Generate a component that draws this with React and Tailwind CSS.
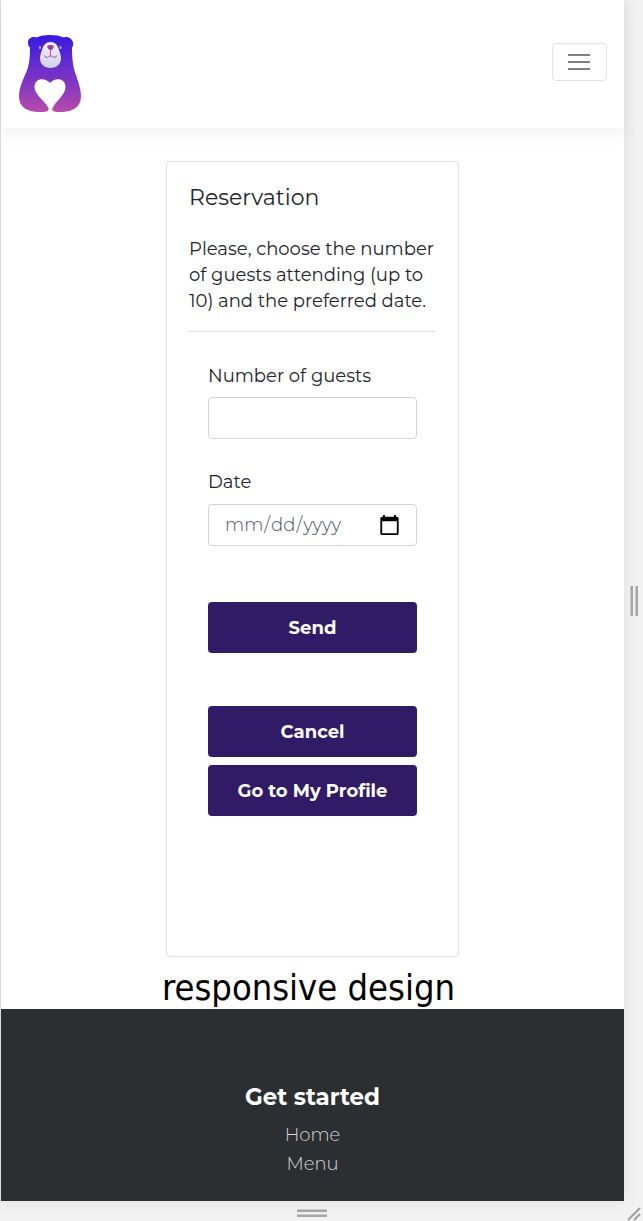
import React from 'react';

function BearLogo() {
  return (
    <svg viewBox="0 0 62 78" className="h-[78px] w-[62px]" role="img" aria-label="Little bear">
      <defs>
        <linearGradient id="fur" x1="0" y1="0" x2="0" y2="1">
          <stop offset="0" stopColor="#3a18e0" />
          <stop offset="0.3" stopColor="#5a2ad2" />
          <stop offset="0.65" stopColor="#8637c0" />
          <stop offset="1" stopColor="#b84cab" />
        </linearGradient>
        <linearGradient id="muzzle" x1="0" y1="0" x2="0" y2="1">
          <stop offset="0" stopColor="#f5f3fb" />
          <stop offset="1" stopColor="#ced2ea" />
        </linearGradient>
      </defs>
      <path
        fill="url(#fur)"
        d="M17 2.500C13 1 9 3.500 9 7.500C9 10 9.500 11.500 11 12.500C11 24 10 32 6 40C2 49 0 55 0 61C0 72 8 77 20 77C27 77 30.500 76 29.500 73C27 67 15.500 60 15.500 52C15.500 43 26 42 31 48C36 42 46.500 43 46.500 52C46.500 60 36 67 33.500 73C32.500 76 35 77 42 77C54 77 62 72 62 61C62 55 60 49 57 40C54 32 53 24 53 12.500C54 11.500 54.500 10 54 7.500C53 3.500 49 1 45 2.500C37 -0.800 25 -0.800 17 2.500Z"
      />
      <path fill="url(#muzzle)" d="M31.500 7C36 7 38.500 10 39.500 13.500C40.500 17 42 19.500 42 23.500C42 29 37.500 33 31.500 33C25.500 33 21 29 21 23.500C21 19.500 22.500 17 23.500 13.500C24.500 10 27 7 31.500 7Z" />
      <ellipse cx="21" cy="12.500" rx="1.100" ry="1.700" fill="#a59cf0" />
      <ellipse cx="41.500" cy="12.500" rx="1.100" ry="1.700" fill="#a59cf0" />
      <path fill="#9a3fb0" d="M28.500 10.500C30 9.800 33 9.800 34.500 10.500C35.500 13 33 15 31.500 15C30 15 27.500 13 28.500 10.500Z" />
      <path fill="none" stroke="#c45bb0" strokeWidth="1.200" strokeLinecap="round" d="M31.500 15V21M25.500 21C27 23 30 22.500 31.500 20.500C33 22.500 36 23 37.500 21" />
    </svg>
  );
}

function Header() {
  return (
    <header className="flex items-start justify-between pt-[35px] pr-[17px] pb-[15px] pl-[18px] shadow-[0_6px_16px_rgba(0,0,0,0.06)]">
      <a href="#home"><BearLogo /></a>
      <button type="button" aria-label="Toggle navigation" className="mt-2 flex h-[38px] w-[55px] items-center justify-center rounded border border-[#e2e2e2] pr-0.5">
        <svg viewBox="0 0 22 16" className="h-4 w-[22px]" stroke="#808080" strokeWidth="2" aria-hidden="true">
          <path d="M0 1H22M0 8H22M0 15H22" />
        </svg>
      </button>
    </header>
  );
}

const field = 'block h-[42px] w-full rounded border border-[#ced4da] bg-white px-[15px] text-lg font-light text-[#495057] [&::-webkit-calendar-picker-indicator]:size-[23px] [&::-webkit-calendar-picker-indicator]:p-0';
const action = 'h-[51px] w-full rounded bg-[#311b66] text-lg font-bold text-white';

function ReservationCard() {
  return (
    <section className="mx-auto mt-[33px] min-h-[796px] w-[293px] rounded border border-[#dfdfdf] px-[22px] pt-5">
      <h1 className="text-[22px] leading-8">Reservation</h1>
      <p className="mt-[22px] border-b border-[#dfdfdf] pb-[17px] text-lg leading-[26px]">
        Please, choose the number of guests attending (up to 10) and the preferred date.
      </p>
      <form className="px-[19px] pt-[30px]" onSubmit={(e) => e.preventDefault()}>
        <label htmlFor="guests" className="mb-[7px] block text-lg leading-7">Number of guests</label>
        <input id="guests" type="text" inputMode="numeric" className={field} />
        <label htmlFor="date" className="mt-[29px] mb-2 block text-lg leading-7">Date</label>
        <input id="date" type="date" className={field} />
        <button type="submit" className={action + ' mt-14'}>Send</button>
        <button type="button" className={action + ' mt-[53px]'}>Cancel</button>
        <button type="button" className={action + ' mt-2'}>Go to My Profile</button>
      </form>
    </section>
  );
}

function Footer() {
  return (
    <footer className="bg-[#2c2f32] pt-[72px] pb-[22px] text-center">
      <h2 className="text-[23px] leading-8 font-bold text-white">Get started</h2>
      <nav className="mt-2 flex flex-col items-center text-lg leading-[29px] font-light text-[#d6d6d6]">
        <a href="#home">Home</a>
        <a href="#menu">Menu</a>
      </nav>
    </footer>
  );
}

export default function App() {
  return (
    <div className="grid grid-cols-[1fr_19px] bg-[#f2f2f2] font-['Montserrat','Inter',sans-serif] font-normal text-[#212529]">
      <main className="border-l border-[#dcdcdc] bg-white shadow-[0_0_16px_rgba(0,0,0,0.08)]">
        <Header />
        <ReservationCard />
        <p className="relative z-10 -mb-1 h-14 pt-2 pr-2 text-center font-['DejaVu_Sans_Condensed','Noto_Sans',sans-serif] text-[36px] leading-[46px] whitespace-nowrap text-black [text-shadow:0_0_2px_white,0_1px_2px_white]">
          responsive design
        </p>
        <Footer />
      </main>
      <div className="flex items-center justify-center">
        <svg viewBox="0 0 8 30" className="h-[30px] w-2" fill="#a6a6a6" aria-hidden="true">
          <path d="M0.500 0H3V30H0.500ZM5.500 0H8V30H5.500Z" />
        </svg>
      </div>
      <div className="flex h-5 items-center justify-center pt-1">
        <svg viewBox="0 0 30 8" className="h-2 w-[30px]" fill="#a6a6a6" aria-hidden="true">
          <path d="M0 0.500H30V3H0ZM0 5.500H30V8H0Z" />
        </svg>
      </div>
      <div className="flex items-end justify-center">
        <svg viewBox="0 0 14 14" className="size-3.5" stroke="#a0a0a0" strokeWidth="2" aria-hidden="true">
          <path d="M1 13L13 1M7 13L13 7" />
        </svg>
      </div>
    </div>
  );
}
